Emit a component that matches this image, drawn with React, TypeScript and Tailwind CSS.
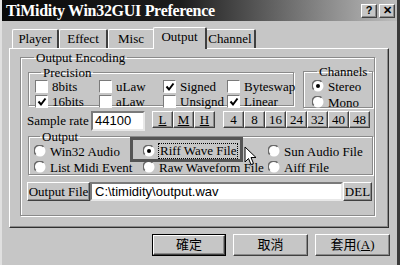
import React from 'react';

const raised =
  'border border-t-white border-l-white border-r-[#404040] border-b-[#404040] shadow-[inset_-1px_-1px_0_#8a8a8a] bg-[#c6c6c6]';
const sunken =
  'border-2 border-t-[#7a7a7a] border-l-[#7a7a7a] border-r-[#e8e8e8] border-b-[#e8e8e8] bg-white';
const group =
  'border border-[#8a8a8a] shadow-[1px_1px_0_#fff,inset_1px_1px_0_#fff] m-0';

function Check({ label, checked }: { label: string; checked?: boolean }) {
  return (
    <div className="flex items-center gap-[4px] w-[64px] h-[15px]">
      <span className="w-[13px] h-[13px] shrink-0 border border-t-[#7a7a7a] border-l-[#7a7a7a] border-r-white border-b-white bg-white flex items-center justify-center">
        {checked && (
          <svg width="10" height="10" viewBox="0 0 10 10">
            <path d="M1.5 4.5 L4 7.5 L8.5 1.5" stroke="#000" strokeWidth="2" fill="none" />
          </svg>
        )}
      </span>
      <span className="leading-[15px]">{label}</span>
    </div>
  );
}

function Radio({ label, on, w }: { label: string; on?: boolean; w?: string }) {
  return (
    <div className={`flex items-center gap-[4px] h-[16px] ${w ?? ''}`}>
      <svg width="12" height="12" viewBox="0 0 12 12" className="shrink-0">
        <circle cx="6" cy="6" r="5.5" fill="#fff" />
        <path d="M1.8 9.5 A5 5 0 0 1 9.5 1.8" stroke="#6a6a6a" strokeWidth="1.5" fill="none" />
        {on && <circle cx="6" cy="6" r="2" fill="#000" />}
      </svg>
      <span className="leading-[15px] whitespace-nowrap">{label}</span>
    </div>
  );
}

function Tab({ label, w, active }: { label: string; w: string; active?: boolean }) {
  return (
    <div
      className={`${w} flex items-center justify-center whitespace-nowrap border-t border-l border-t-white border-l-white border-r-2 border-r-[#404040] rounded-t-[2px] bg-[#c6c6c6] ${
        active ? 'h-[22px] -mx-[2px] relative z-10 -mb-[1px] pb-[3px]' : 'h-[19px]'
      }`}
    >
      {label}
    </div>
  );
}

export default function App() {
  const rates = ['4', '8', '16', '24', '32', '40', '48'];
  return (
    <div className="w-[400px] h-[265px] bg-[#c6c6c6] font-['Liberation_Serif','Noto_Sans_CJK_TC',serif] text-[13px] text-black overflow-hidden border-r-[3px] border-r-[#3a3a3a] border-l-2 border-l-[#e0e0e0]">
      {/* title bar */}
      <div className="h-[21px] flex items-center pl-[4px] pr-[2px] bg-[linear-gradient(to_right,#0a0a0a_0%,#1c1c1c_45%,#8a8a8a_82%,#bdbdbd_100%)]">
        <span className="text-white font-bold text-[16px] tracking-[-0.3px] leading-none">
          TiMidity Win32GUI Preference
        </span>
        <div className="ml-auto flex gap-[2px]">
          <div className={`${raised} w-[16px] h-[14px] flex items-center justify-center font-['Liberation_Sans',sans-serif] font-bold text-[11px] leading-none`}>?</div>
          <div className={`${raised} w-[16px] h-[14px] flex items-center justify-center font-['Liberation_Sans',sans-serif] font-bold text-[11px] leading-none`}>✕</div>
        </div>
      </div>

      <div className="pl-[7px] pt-[8px]">
        {/* tabs */}
        <div className="flex items-end pl-[3px] h-[19px]">
          <Tab label="Player" w="w-[47px]" />
          <Tab label="Effect" w="w-[49px]" />
          <Tab label="Misc" w="w-[47px]" />
          <Tab label="Output" w="w-[54px]" active />
          <Tab label="Channel" w="w-[51px]" />
        </div>

        {/* panel */}
        <div className="w-[380px] h-[180px] border border-t-white border-l-white border-r-[#303030] border-b-[#303030] shadow-[inset_-1px_-1px_0_#8a8a8a]">
          <fieldset className={`${group} ml-[10px] mt-[2px] w-[355px] h-[165px] pl-[7px] pr-[1px]`}>
            <legend className="ml-[6px] px-[2px] leading-[13px]">Output Encoding</legend>

            <div className="flex gap-[9px] mt-[2px]">
              <fieldset className={`${group} w-[266px] h-[40px] pl-[6px]`}>
                <legend className="ml-[6px] px-[2px] leading-[13px]">Precision</legend>
                <div className="flex">
                  <Check label="8bits" />
                  <Check label="uLaw" />
                  <Check label="Signed" checked />
                  <Check label="Byteswap" />
                </div>
                <div className="flex">
                  <Check label="16bits" checked />
                  <Check label="aLaw" />
                  <Check label="Unsignd" />
                  <Check label="Linear" checked />
                </div>
              </fieldset>
              <fieldset className={`${group} w-[70px] h-[43px] pl-[8px] -mt-[1px]`}>
                <legend className="ml-[5px] px-[2px] leading-[13px]">Channels</legend>
                <Radio label="Stereo" on />
                <Radio label="Mono" />
              </fieldset>
            </div>

            {/* sample rate */}
            <div className="flex items-start mt-[3px] h-[20px]">
              <span className="w-[64px] leading-[20px] -ml-[1px]">Sample rate</span>
              <div className={`${sunken} w-[54px] h-[20px] font-['Liberation_Sans',sans-serif] text-[13px] leading-[16px] pl-[2px]`}>44100</div>
              <div className="flex ml-[7px]">
                {['L', 'M', 'H'].map((b) => (
                  <div key={b} className={`${raised} w-[21px] h-[17px] flex items-center justify-center leading-none underline`}>
                    {b}
                  </div>
                ))}
              </div>
              <div className="flex ml-[8px]">
                {rates.map((b) => (
                  <div key={b} className={`${raised} w-[21px] h-[17px] flex items-center justify-center leading-none`}>
                    {b}
                  </div>
                ))}
              </div>
            </div>

            {/* output */}
            <fieldset className={`${group} w-[345px] h-[45px] pl-[5px] -mt-[1px]`}>
              <legend className="ml-[6px] px-[2px] leading-[13px]">Output</legend>
              <div className="relative flex">
                <div className="w-[109px]">
                  <Radio label="Win32 Audio" />
                  <Radio label="List Midi Event" />
                </div>
                <div className="w-[125px]">
                  <div className="flex items-center gap-[3px] h-[16px]">
                    <svg width="12" height="12" viewBox="0 0 12 12" className="shrink-0">
                      <circle cx="6" cy="6" r="5.5" fill="#fff" />
                      <path d="M1.8 9.5 A5 5 0 0 1 9.5 1.8" stroke="#6a6a6a" strokeWidth="1.5" fill="none" />
                      <circle cx="6" cy="6" r="2" fill="#000" />
                    </svg>
                    <span className="leading-[14px] px-[1px] border border-dotted border-black whitespace-nowrap">Riff Wave File</span>
                  </div>
                  <Radio label="Raw Waveform File" />
                </div>
                <div>
                  <Radio label="Sun Audio File" />
                  <Radio label="Aiff File" />
                </div>
                {/* highlight annotation */}
                <div className="absolute left-[96px] top-[-6px] w-[113px] h-[25px] border-[3px] border-[#555]" />
                {/* mouse pointer */}
                <svg className="absolute left-[210px] top-[3px]" width="13" height="20" viewBox="0 0 13 20">
                  <path d="M1 1 L1 16 L4.5 12.5 L7 18.5 L9.5 17.5 L7 11.5 L12 11.5 Z" fill="#fff" stroke="#000" strokeWidth="1" />
                </svg>
              </div>
            </fieldset>

            {/* output file */}
            <div className="flex mt-[7px] -ml-[1px] h-[19px]">
              <div className={`${raised} w-[63px] h-[19px] flex items-center justify-center whitespace-nowrap leading-none`}>Output File</div>
              <div className={`${sunken} w-[253px] h-[19px] font-['Liberation_Sans',sans-serif] text-[13px] leading-[15px] pl-[3px]`}>
                C:\timidity\output.wav
              </div>
              <div className={`${raised} w-[29px] h-[19px] flex items-center justify-center leading-none`}>DEL</div>
            </div>
          </fieldset>
        </div>

        {/* bottom buttons */}
        <div className="flex mt-[6px] pl-[143px] gap-[7px]">
          <div className="w-[74px] h-[22px] border border-black">
            <div className={`${raised} w-full h-full flex items-center justify-center`}>確定</div>
          </div>
          <div className={`${raised} w-[75px] h-[22px] flex items-center justify-center`}>取消</div>
          <div className={`${raised} w-[75px] h-[22px] flex items-center justify-center`}>
            套用(<span className="underline">A</span>)
          </div>
        </div>
      </div>
    </div>
  );
}
